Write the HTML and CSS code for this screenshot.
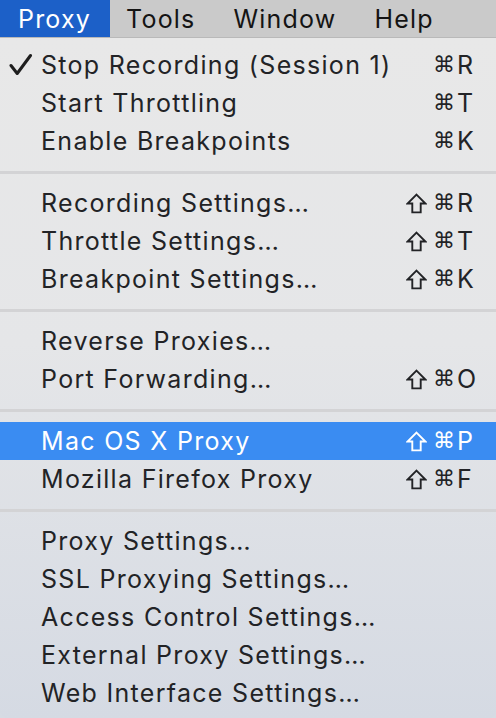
FILE: index.html
```html
<!DOCTYPE html>
<html>
<head>
<meta charset="utf-8">
<link rel="stylesheet" href="styles.css">
</head>
<body>
<div class="menubar">
  <span class="mb-item active">Proxy</span>
  <span class="mb-item">Tools</span>
  <span class="mb-item">Window</span>
  <span class="mb-item">Help</span>
</div>
<div class="menu">
  <div class="row">
    <span class="check"><svg width="24" height="24" viewBox="0 0 24 24"><path d="M2 12.5 L8.2 20.5 L21.5 2.5" fill="none" stroke="#1e1e1e" stroke-width="3" stroke-linecap="round" stroke-linejoin="round"/></svg></span>
    <span class="label">Stop Recording (Session 1)</span>
    <span class="mods"><span class="cmd">⌘</span></span><span class="key">R</span>
  </div>
  <div class="row"><span class="check"></span><span class="label">Start Throttling</span><span class="mods"><span class="cmd">⌘</span></span><span class="key">T</span></div>
  <div class="row"><span class="check"></span><span class="label">Enable Breakpoints</span><span class="mods"><span class="cmd">⌘</span></span><span class="key">K</span></div>
  <div class="sep"></div>
  <div class="row"><span class="check"></span><span class="label">Recording Settings…</span><span class="mods"><svg class="shift" viewBox="0 0 20 20"><path d="M10 1.5 L18.5 10 L14 10 L14 18.5 L6 18.5 L6 10 L1.5 10 Z"/></svg><span class="cmd">⌘</span></span><span class="key">R</span></div>
  <div class="row"><span class="check"></span><span class="label">Throttle Settings…</span><span class="mods"><svg class="shift" viewBox="0 0 20 20"><path d="M10 1.5 L18.5 10 L14 10 L14 18.5 L6 18.5 L6 10 L1.5 10 Z"/></svg><span class="cmd">⌘</span></span><span class="key">T</span></div>
  <div class="row"><span class="check"></span><span class="label">Breakpoint Settings…</span><span class="mods"><svg class="shift" viewBox="0 0 20 20"><path d="M10 1.5 L18.5 10 L14 10 L14 18.5 L6 18.5 L6 10 L1.5 10 Z"/></svg><span class="cmd">⌘</span></span><span class="key">K</span></div>
  <div class="sep"></div>
  <div class="row"><span class="check"></span><span class="label">Reverse Proxies…</span><span class="mods"></span><span class="key"></span></div>
  <div class="row"><span class="check"></span><span class="label">Port Forwarding…</span><span class="mods"><svg class="shift" viewBox="0 0 20 20"><path d="M10 1.5 L18.5 10 L14 10 L14 18.5 L6 18.5 L6 10 L1.5 10 Z"/></svg><span class="cmd">⌘</span></span><span class="key">O</span></div>
  <div class="sep"></div>
  <div class="row selected"><span class="check"></span><span class="label">Mac OS X Proxy</span><span class="mods"><svg class="shift" viewBox="0 0 20 20"><path d="M10 1.5 L18.5 10 L14 10 L14 18.5 L6 18.5 L6 10 L1.5 10 Z"/></svg><span class="cmd">⌘</span></span><span class="key">P</span></div>
  <div class="row"><span class="check"></span><span class="label">Mozilla Firefox Proxy</span><span class="mods"><svg class="shift" viewBox="0 0 20 20"><path d="M10 1.5 L18.5 10 L14 10 L14 18.5 L6 18.5 L6 10 L1.5 10 Z"/></svg><span class="cmd">⌘</span></span><span class="key">F</span></div>
  <div class="sep"></div>
  <div class="row"><span class="check"></span><span class="label">Proxy Settings…</span><span class="mods"></span><span class="key"></span></div>
  <div class="row"><span class="check"></span><span class="label">SSL Proxying Settings…</span><span class="mods"></span><span class="key"></span></div>
  <div class="row"><span class="check"></span><span class="label">Access Control Settings…</span><span class="mods"></span><span class="key"></span></div>
  <div class="row"><span class="check"></span><span class="label">External Proxy Settings…</span><span class="mods"></span><span class="key"></span></div>
  <div class="row"><span class="check"></span><span class="label">Web Interface Settings…</span><span class="mods"></span><span class="key"></span></div>
</div>
</body>
</html>
```

FILE: styles.css
```css
html, body {
  margin: 0;
  padding: 0;
  width: 496px;
  height: 718px;
  overflow: hidden;
  background: #d6dbe3;
  font-family: Inter, "Liberation Sans", Arial, sans-serif;
}

.menubar {
  height: 37px;
  background: #cacaca;
  border-bottom: 1px solid #b9b9b9;
  display: flex;
  align-items: stretch;
  font-size: 25px;
  letter-spacing: 1.2px;
  color: #141414;
}

.mb-item {
  display: flex;
  align-items: center;
  padding: 0 22px 0 16px;
}

.mb-item.active {
  background: #1c60c8;
  color: #ffffff;
  padding: 0 19px 0 18px;
}

.menu {
  height: 680px;
  box-sizing: border-box;
  padding-top: 8px;
  background: linear-gradient(180deg, #e8e8e8 0%, #e5e6e8 45%, #d5dae3 100%);
  border-radius: 0 0 7px 7px;
  color: #222326;
  font-size: 25px;
  letter-spacing: 1.3px;
}

.row {
  height: 38px;
  display: grid;
  grid-template-columns: 41px 1fr auto 26px;
  align-items: center;
  padding-right: 15px;
}

.row.selected {
  background: #3a8cf2;
  color: #ffffff;
}

.check {
  display: flex;
  align-items: center;
  padding-left: 9px;
}

.label {
  white-space: nowrap;
}

.mods {
  display: flex;
  align-items: center;
  justify-content: flex-end;
  gap: 6px;
}

.cmd {
  font-family: "DejaVu Sans", sans-serif;
  font-size: 22px;
  letter-spacing: 0;
  line-height: 1;
}

.shift {
  width: 21px;
  height: 21px;
  fill: none;
  stroke: currentColor;
  stroke-width: 1.8;
  stroke-linejoin: miter;
}

.key {
  padding-left: 2px;
  letter-spacing: 0;
}

.sep {
  height: 24px;
  display: flex;
  align-items: center;
}

.sep::before {
  content: "";
  display: block;
  width: 100%;
  height: 3px;
  background: #d3d3d5;
}
```
